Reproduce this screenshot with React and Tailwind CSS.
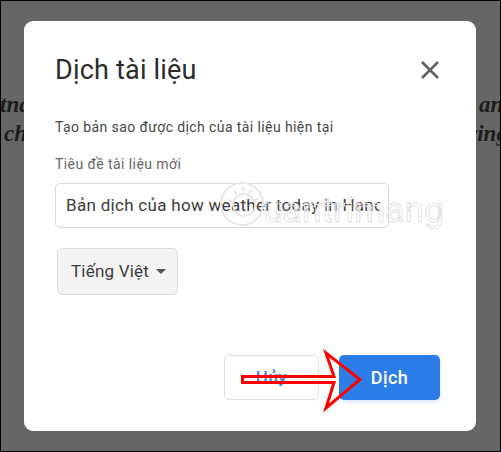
export default function App() {
  return (
    <div className="relative w-[501px] h-[452px] overflow-hidden bg-[#666666] border border-black flex flex-col items-start pt-[20px] pl-[23px]" style={{ fontFamily: 'Roboto, sans-serif' }}>
      <div className="absolute left-0 top-[89px] w-[24px] overflow-hidden h-[60px] text-[#1c1c1c] italic font-bold text-[23px] leading-[29px]" style={{ fontFamily: '"Liberation Serif", serif' }}>
        <div className="-ml-[1px] whitespace-nowrap">tna</div>
        <div className="ml-[3px] whitespace-nowrap">chi</div>
      </div>
      <div className="absolute left-[475px] top-[89px] w-[26px] overflow-hidden h-[60px] text-[#1c1c1c] italic font-bold text-[23px] leading-[29px]" style={{ fontFamily: '"Liberation Serif", serif' }}>
        <div className="ml-[3px] whitespace-nowrap">an</div>
        <div className="-ml-[9px] whitespace-nowrap">ving</div>
      </div>

      <div className="relative w-[452px] h-[410px] bg-white rounded-[9px] pl-[31px] pr-[30px] flex flex-col">
        <div className="flex items-center justify-between pt-[30px] h-[67px] pr-[5px]">
          <h1 className="text-[27px] font-normal leading-[40px] text-[#2b2b2b] tracking-[0.2px]">Dịch tài liệu</h1>
          <svg width="24" height="24" viewBox="0 0 24 24" fill="none" stroke="#5f6368" strokeWidth="2.6" className="-mr-[1px]">
            <path d="M4 4 L20 20 M20 4 L4 20" />
          </svg>
        </div>
        <p className="mt-[29px] text-[14px] leading-[20px] text-[#444746] tracking-[0.4px]">Tạo bản sao được dịch của tài liệu hiện tại</p>
        <label className="mt-[17px] text-[14px] leading-[20px] text-[#666] tracking-[0.42px]">Tiêu đề tài liệu mới</label>
        <div className="mt-[9px] w-[334px] h-[45px] border border-[#d9d9d9] rounded-[5px] pl-[10px] pr-[8px] flex items-center">
          <span className="overflow-hidden whitespace-nowrap text-[17px] text-[#3c3c3c] tracking-[0.3px]">Bản dịch của how weather today in Hanoi</span>
        </div>
        <div className="mt-[20px] ml-[2px] w-[121px] h-[47px] bg-[#f3f3f3] border border-[#dcdcdc] rounded-[5px] flex items-center pl-[13px] gap-[7px]">
          <span className="text-[17px] text-[#3c3c3c] tracking-[0.2px]">Tiếng Việt</span>
          <span className="w-0 h-0 border-x-[5px] border-x-transparent border-t-[5px] border-t-[#555]"></span>
        </div>
        <div className="mt-[60px] flex justify-end gap-[20px] pr-[6px]">
          <button className="w-[95px] h-[45px] bg-white border border-[#dfdfdf] rounded-[5px] text-[17px] font-medium text-[#3f80ea] tracking-[0.5px]">Hủy</button>
          <button className="w-[101px] h-[45px] bg-[#2d7de8] rounded-[5px] text-[18px] font-medium text-white tracking-[0.5px] shadow-[0_2px_4px_rgba(45,125,232,0.2)]">Dịch</button>
        </div>
      </div>

      <svg className="absolute left-[210px] top-[170px] pointer-events-none" width="240" height="70" viewBox="0 0 240 70" fill="none">
        <circle cx="31" cy="33" r="21" stroke="#e6e6e6" strokeWidth="2" />
        <circle cx="33" cy="34" r="11" stroke="#e2e2e2" strokeWidth="1.5" />
        <path d="M23 20l3 3M32 16v4M41 19l-3 3M18 29l3 1M47 28l-3 1" stroke="#dcdcdc" strokeWidth="1.5" />
      </svg>
      <div className="absolute left-[262px] top-[187px] text-[35px] leading-[46px] text-transparent tracking-[0.3px] pointer-events-none" style={{ WebkitTextStroke: '1px #e4e4e4' }}>uantrimang</div>

      <svg className="absolute left-[238px] top-[348px] pointer-events-none" width="130" height="64" viewBox="0 0 130 64" fill="none">
        <path d="M3.5 27.5 H95 L87 4 L121 30.5 L87 59 L95 33.5 H3.5 Z" stroke="#ff0000" strokeWidth="3" fill="none" />
      </svg>
    </div>
  );
}
